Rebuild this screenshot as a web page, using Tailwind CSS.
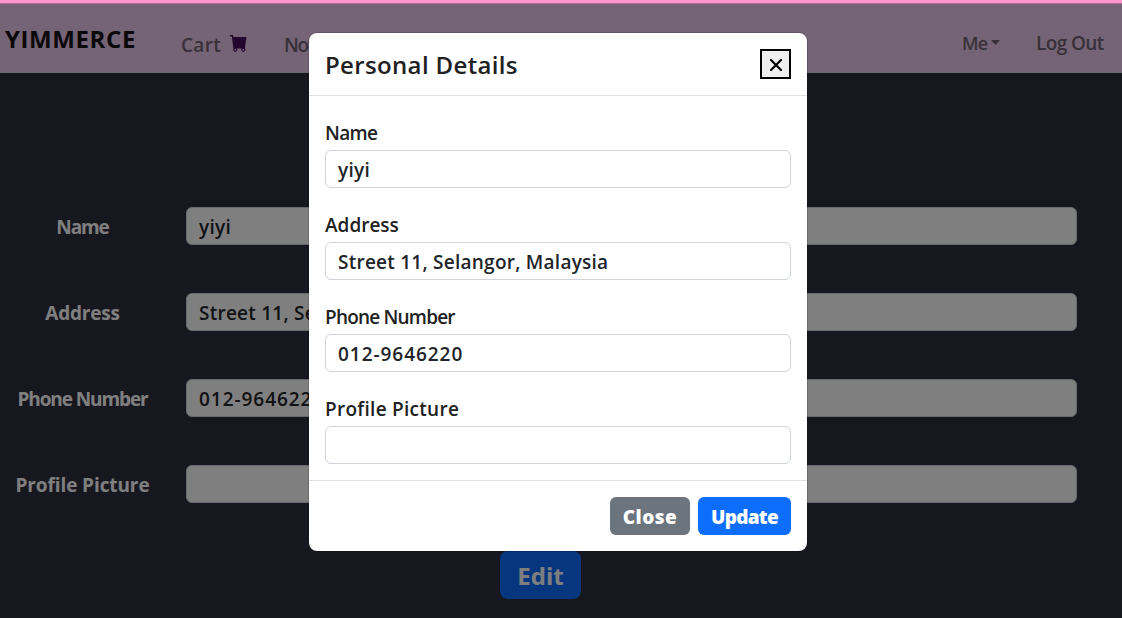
<!DOCTYPE html>
<html lang="en">
<head>
<meta charset="utf-8">
<title>Yimmerce</title>
<script src="https://cdn.jsdelivr.net/npm/@tailwindcss/browser@4"></script>
</head>
<body class="relative h-[618px] overflow-hidden bg-[#2e2e40] font-['Open_Sans',sans-serif] text-[19px] leading-6 font-semibold text-[#212529]">
  <header class="flex h-[73px] items-start border-b border-[#d4d0d4] bg-[#eac8ea] pl-[5px] pr-[18px] text-[#716274]">
    <a class="mt-[27px] w-[131px] whitespace-nowrap text-[24px] font-bold tracking-[0.6px] text-[#151015]">YIMMERCE</a>
    <nav class="ml-[45px] mt-[33px] flex items-start whitespace-nowrap">
      <a class="flex w-[103px] items-start tracking-[0.3px]">Cart
        <svg class="ml-[9px] mt-[2px] h-[17px] w-[17px]" viewBox="0 0 17 17" fill="none" stroke="#480b5c">
          <path d="M0 .8h2.5l1.5 12h11" stroke-width="1.4"/>
          <path d="M3 2h13.5L15 12.2H4.3z" fill="#480b5c" stroke="none"/>
          <circle cx="5.3" cy="14.7" r="1.5" stroke-width="1.2"/><circle cx="13.3" cy="14.7" r="1.5" stroke-width="1.2"/>
        </svg>
      </a>
      <a class="tracking-[-1.3px]">Nov</a>
    </nav>
    <nav class="ml-auto mt-[31px] flex items-start whitespace-nowrap">
      <a class="flex w-[74px] items-start text-[18px] tracking-[-0.8px]">Me
        <svg class="ml-[4px] mt-[9px] h-[5px] w-[9px]" viewBox="0 0 9 5"><path d="M0 0h9L4.5 5z" fill="#716274"/></svg>
      </a>
      <a class="w-[68px] tracking-[-0.6px]">Log Out</a>
    </nav>
  </header>

  <main class="pt-[134px] pr-[45px]">
    <form class="flex flex-col gap-12 text-white">
      <label class="flex h-[38px] items-center"><span class="w-[165px] pt-[2px] text-center font-bold tracking-[-1.1px]">Name</span><span class="ml-[21px] flex h-full flex-1 items-center rounded-md border border-[#ced4da] bg-white px-3 pt-[2px] tracking-[0.3px] text-[#212529]">yiyi</span></label>
      <label class="flex h-[38px] items-center"><span class="w-[165px] pt-[2px] text-center font-bold tracking-[-0.2px]">Address</span><span class="ml-[21px] flex h-full flex-1 items-center rounded-md border border-[#ced4da] bg-white px-3 pt-[2px] tracking-[0.25px] text-[#212529]">Street 11, Selangor, Malaysia</span></label>
      <label class="flex h-[38px] items-center"><span class="w-[165px] pt-[2px] text-center font-bold tracking-[-1.1px]">Phone Number</span><span class="ml-[21px] flex h-full flex-1 items-center rounded-md border border-[#ced4da] bg-white px-3 pt-[2px] tracking-[0.95px] text-[#212529]">012-9646220</span></label>
      <label class="flex h-[38px] items-center"><span class="w-[165px] pt-[2px] text-center font-bold tracking-[-0.1px]">Profile Picture</span><span class="ml-[21px] h-full flex-1 rounded-md border border-[#ced4da] bg-white"></span></label>
    </form>
    <button class="mt-12 ml-[500px] flex h-12 w-[81px] items-center justify-center rounded-lg bg-[#0d6efd] pt-px text-[24px] font-bold text-white">Edit</button>
  </main>

  <!-- Backdrop and dialog -->
  <div class="absolute inset-0 bg-black/50"></div>
  <section class="absolute left-[309px] top-[33px] flex h-[518px] w-[498px] flex-col rounded-lg bg-white outline outline-black/15">
    <header class="flex h-[63px] items-start justify-between border-b border-[#dee2e6] px-4 pt-4">
      <h1 class="text-[24px] leading-8 tracking-[0.35px] text-[#212121]">Personal Details</h1>
      <button class="flex h-[30px] w-[31px] items-center justify-center border-2 border-black bg-[#efefef]" aria-label="Close">
        <svg class="mt-[2px] h-3 w-3" viewBox="0 0 12 12" stroke="#000" stroke-width="2.2" stroke-linecap="round"><path d="M1 1l10 10M11 1L1 11"/></svg>
      </button>
    </header>
    <div class="flex h-[384px] flex-col gap-6 px-4 pt-6">
      <label class="flex flex-col gap-[6px]"><span class="block h-6 pt-px tracking-[-0.7px] text-[#212121]">Name</span><span class="flex h-[38px] items-center rounded-md border border-[#ced4da] px-3 pt-[2px] tracking-[0.3px]">yiyi</span></label>
      <label class="flex flex-col gap-[6px]"><span class="block h-6 pt-px text-[#212121]">Address</span><span class="flex h-[38px] items-center rounded-md border border-[#ced4da] px-3 pt-[2px] tracking-[0.25px]">Street 11, Selangor, Malaysia</span></label>
      <label class="flex flex-col gap-[6px]"><span class="block h-6 pt-px tracking-[-0.8px] text-[#212121]">Phone Number</span><span class="flex h-[38px] items-center rounded-md border border-[#ced4da] px-3 pt-[2px] tracking-[0.95px]">012-9646220</span></label>
      <label class="flex flex-col gap-[6px]"><span class="block h-6 pt-px tracking-[0.28px] text-[#212121]">Profile Picture</span><span class="h-[38px] rounded-md border border-[#ced4da]"></span></label>
    </div>
    <footer class="flex flex-1 items-start justify-end gap-2 border-t border-[#dee2e6] px-4 pt-4 font-extrabold text-white">
      <button class="h-[38px] w-[80px] rounded-md bg-[#6c757d] pt-px tracking-[0.5px]">Close</button>
      <button class="h-[38px] w-[93px] rounded-md bg-[#0d6efd] pt-px tracking-[-0.7px]">Update</button>
    </footer>
  </section>

  <!-- Page loading bar, above the backdrop -->
  <div class="absolute inset-x-0 top-0 h-1 border-b border-[#b06c94] bg-[#ff94cf]"></div>
</body>
</html>
